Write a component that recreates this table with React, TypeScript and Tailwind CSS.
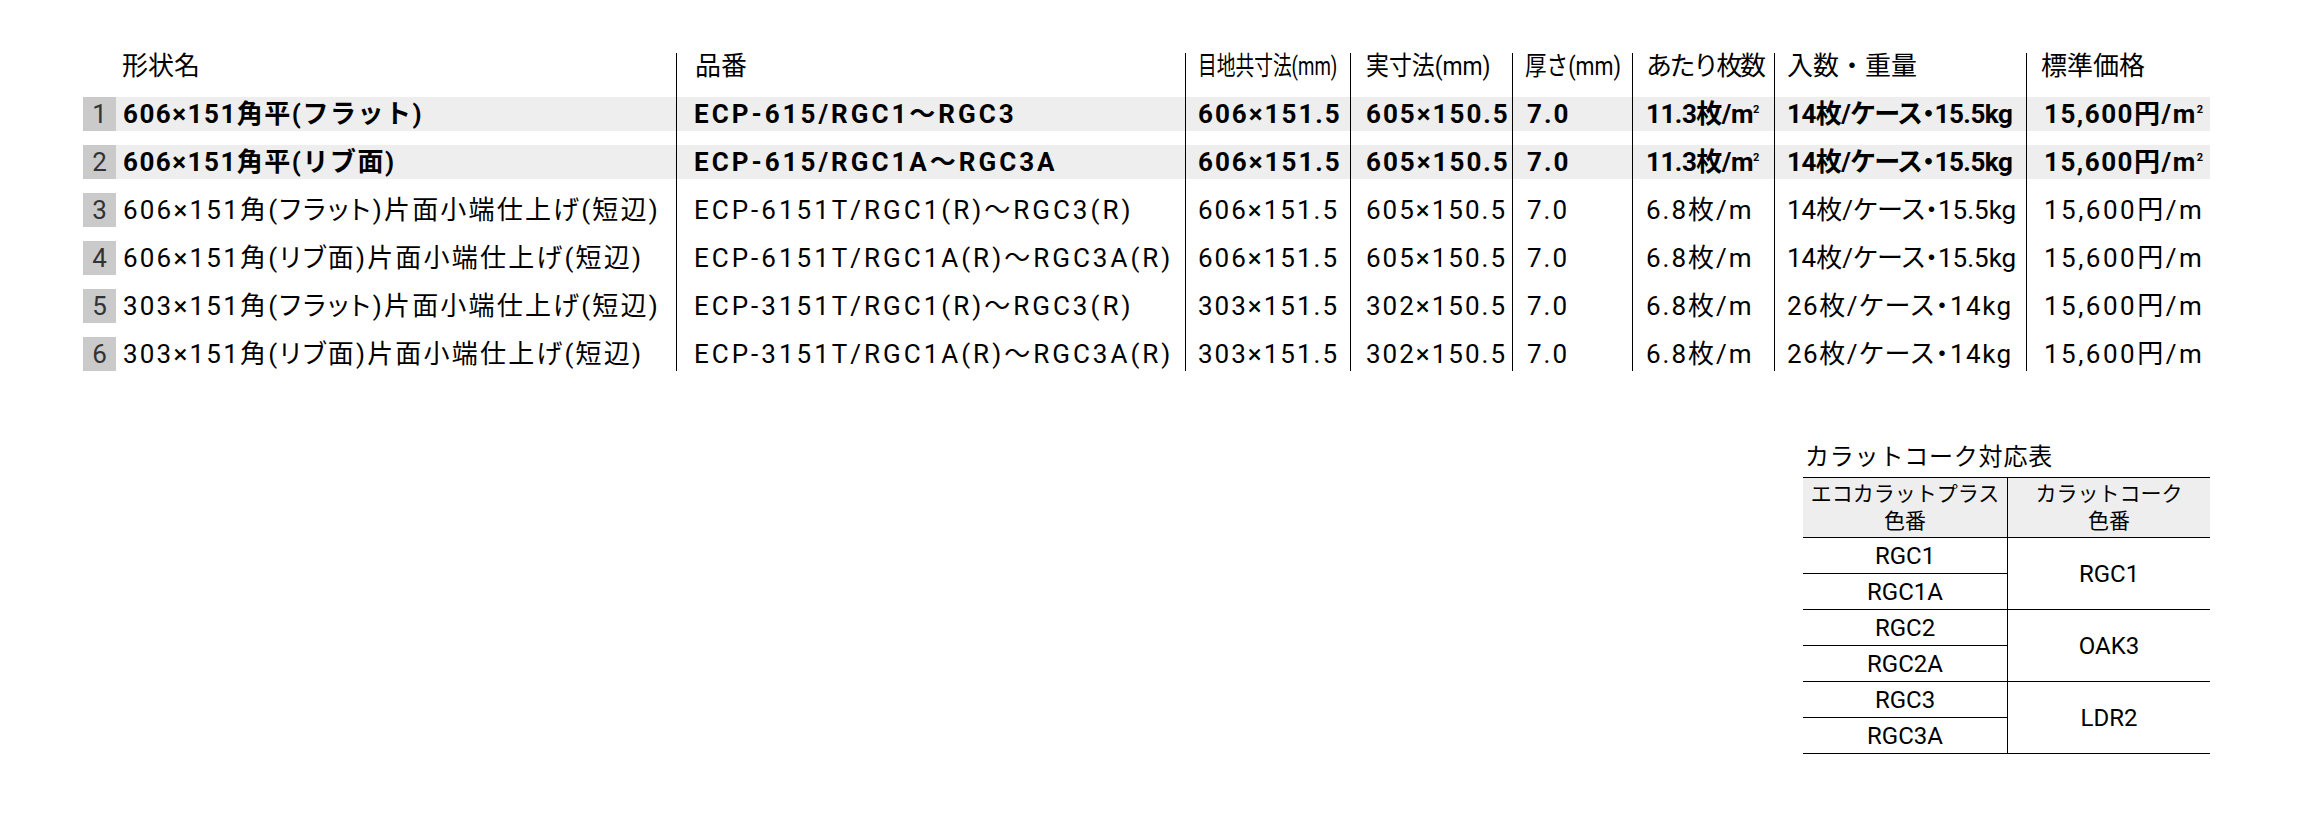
import React from "react";

type Row = {
  n: number;
  bold: boolean;
  name: string;
  code: string;
  joint: string;
  actual: string;
  thick: string;
  per: string;
  pack: string;
  price: string;
  sq: boolean;
};

const rows: Row[] = [
  { n: 1, bold: true, name: "606×151角平(フラット)", code: "ECP-615/RGC1～RGC3", joint: "606×151.5", actual: "605×150.5", thick: "7.0", per: "11.3枚/", pack: "14枚/ケース・15.5kg", price: "15,600円/", sq: true },
  { n: 2, bold: true, name: "606×151角平(リブ面)", code: "ECP-615/RGC1A～RGC3A", joint: "606×151.5", actual: "605×150.5", thick: "7.0", per: "11.3枚/", pack: "14枚/ケース・15.5kg", price: "15,600円/", sq: true },
  { n: 3, bold: false, name: "606×151角(フラット)片面小端仕上げ(短辺)", code: "ECP-6151T/RGC1(R)～RGC3(R)", joint: "606×151.5", actual: "605×150.5", thick: "7.0", per: "6.8枚/", pack: "14枚/ケース・15.5kg", price: "15,600円/", sq: false },
  { n: 4, bold: false, name: "606×151角(リブ面)片面小端仕上げ(短辺)", code: "ECP-6151T/RGC1A(R)～RGC3A(R)", joint: "606×151.5", actual: "605×150.5", thick: "7.0", per: "6.8枚/", pack: "14枚/ケース・15.5kg", price: "15,600円/", sq: false },
  { n: 5, bold: false, name: "303×151角(フラット)片面小端仕上げ(短辺)", code: "ECP-3151T/RGC1(R)～RGC3(R)", joint: "303×151.5", actual: "302×150.5", thick: "7.0", per: "6.8枚/", pack: "26枚/ケース・14kg", price: "15,600円/", sq: false },
  { n: 6, bold: false, name: "303×151角(リブ面)片面小端仕上げ(短辺)", code: "ECP-3151T/RGC1A(R)～RGC3A(R)", joint: "303×151.5", actual: "302×150.5", thick: "7.0", per: "6.8枚/", pack: "26枚/ケース・14kg", price: "15,600円/", sq: false },
];

const groups = [
  { left: ["RGC1", "RGC1A"], right: "RGC1" },
  { left: ["RGC2", "RGC2A"], right: "OAK3" },
  { left: ["RGC3", "RGC3A"], right: "LDR2" },
];

function Unit({ sq }: { sq: boolean }) {
  if (!sq) return <>m</>;
  return (
    <>
      m<span className="align-super text-[11px] leading-none tracking-normal">2</span>
    </>
  );
}

export default function App() {
  return (
    <div className="min-h-[824px] w-[2314px] bg-white pt-[53px] pl-[83px] text-black font-['Roboto','Noto_Sans_CJK_JP',sans-serif]">
      <div className="w-[2127px]">
        {/* header */}
        <div className="flex h-[37px] text-[26px] leading-[26px]">
          <div className="w-[593px] pl-[39px]">形状名</div>
          <div className="w-[509px] border-l border-black pl-[18px]">品番</div>
          <div className="w-[165px] border-l border-black pl-[12px]">
            <span className="inline-block origin-left scale-x-[0.72] whitespace-nowrap">目地共寸法(mm)</span>
          </div>
          <div className="w-[162px] border-l border-black pl-[15px]">
            <span className="inline-block origin-left scale-x-[0.88] whitespace-nowrap">実寸法(mm)</span>
          </div>
          <div className="w-[120px] border-l border-black pl-[12px]">
            <span className="inline-block origin-left scale-x-[0.83] whitespace-nowrap">厚さ(mm)</span>
          </div>
          <div className="w-[142px] border-l border-black pl-[13px] whitespace-nowrap tracking-[-2.5px]">あたり枚数</div>
          <div className="w-[252px] border-l border-black pl-[12px] whitespace-nowrap">入数・重量</div>
          <div className="w-[184px] border-l border-black pl-[14px] whitespace-nowrap">標準価格</div>
        </div>

        {/* rows */}
        {rows.map((r, i) => {
          const band = r.bold ? "bg-[#eeeeee]" : "";
          const last = i === rows.length - 1;
          const light = r.pack.includes("14kg");
          return (
            <div
              key={r.n}
              className={`flex text-[26px] leading-none whitespace-nowrap ${last ? "h-[41px]" : "h-[48px]"} ${r.bold ? "font-bold" : "font-normal"}`}
            >
              <div className="w-[593px] pt-[7px]">
                <div className="flex h-[34px]">
                  <div className="flex w-[33px] items-center justify-center bg-[#cacaca] font-normal text-[#333333]">
                    {r.n}
                  </div>
                  <div
                    className={`flex flex-1 items-center pl-[7px] ${r.bold ? "tracking-[1.5px]" : "tracking-[2.2px] [font-feature-settings:'palt']"} ${band}`}
                  >
                    {r.name}
                  </div>
                </div>
              </div>
              <div className="w-[509px] border-l border-black pt-[7px]">
                <div className={`flex h-[34px] items-center pl-[17px] tracking-[3px] ${band}`}>{r.code}</div>
              </div>
              <div className="w-[165px] border-l border-black pt-[7px]">
                <div className={`flex h-[34px] items-center pl-[12px] tracking-[2px] ${band}`}>{r.joint}</div>
              </div>
              <div className="w-[162px] border-l border-black pt-[7px]">
                <div className={`flex h-[34px] items-center pl-[15px] tracking-[2px] ${band}`}>{r.actual}</div>
              </div>
              <div className="w-[120px] border-l border-black pt-[7px]">
                <div className={`flex h-[34px] items-center pl-[14px] tracking-[2px] ${band}`}>{r.thick}</div>
              </div>
              <div className="w-[142px] border-l border-black pt-[7px]">
                <div className={`flex h-[34px] items-center pl-[13px] ${r.bold ? "tracking-[-0.5px]" : "tracking-[2px]"} ${band}`}>
                  <span>
                    {r.per}
                    <Unit sq={r.sq} />
                  </span>
                </div>
              </div>
              <div className="w-[252px] border-l border-black pt-[7px]">
                <div
                  className={`flex h-[34px] items-center pl-[12px] [font-feature-settings:'palt'] ${r.bold ? "tracking-[-0.5px]" : light ? "tracking-[1.5px]" : "tracking-[0px]"} ${band}`}
                >
                  {r.pack}
                </div>
              </div>
              <div className="w-[184px] border-l border-black pt-[7px]">
                <div className={`flex h-[34px] items-center pl-[17px] ${r.bold ? "tracking-[1.5px]" : "tracking-[2.5px]"} ${band}`}>
                  <span>
                    {r.price}
                    <Unit sq={r.sq} />
                  </span>
                </div>
              </div>
            </div>
          );
        })}

        {/* color reference table */}
        <div className="mt-[71px] flex justify-end">
          <div className="w-[407px]">
            <div className="pl-[2px] text-[24px] leading-[30px] tracking-[0.8px]">カラットコーク対応表</div>
            <div className="mt-[5px] border-t border-black">
              <div className="flex h-[60px] border-b border-black bg-[#eeeeee] text-[21px] leading-[27px]">
                <div className="flex w-[204px] flex-col items-center justify-center">
                  <span>エコカラットプラス</span>
                  <span>色番</span>
                </div>
                <div className="flex flex-1 flex-col items-center justify-center border-l border-black">
                  <span>カラットコーク</span>
                  <span>色番</span>
                </div>
              </div>
              {groups.map((g) => (
                <div key={g.right} className="flex border-b border-black text-[24px] leading-none">
                  <div className="w-[204px]">
                    <div className="flex h-[36px] items-center justify-center border-b border-black">{g.left[0]}</div>
                    <div className="flex h-[35px] items-center justify-center">{g.left[1]}</div>
                  </div>
                  <div className="flex flex-1 items-center justify-center border-l border-black">{g.right}</div>
                </div>
              ))}
            </div>
          </div>
        </div>
      </div>
    </div>
  );
}
